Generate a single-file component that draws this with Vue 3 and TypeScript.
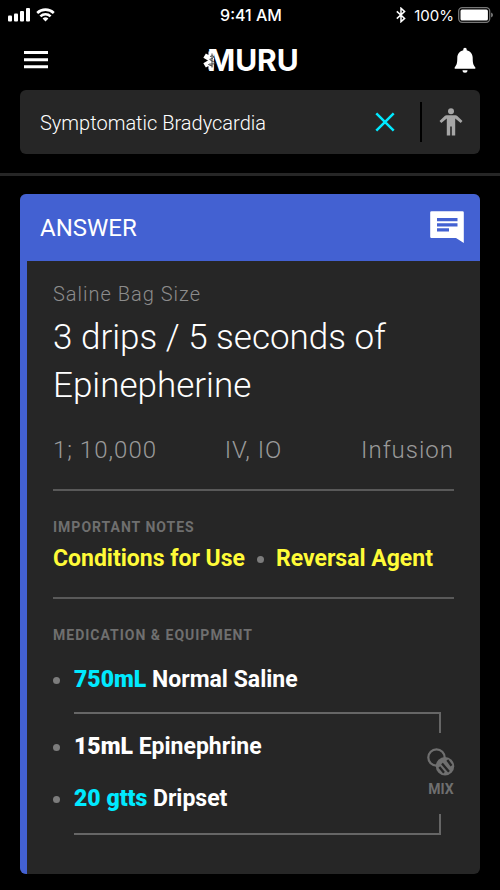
<script setup lang="ts">
import { ref } from 'vue'

interface Supply {
  amount: string
  name: string
  highlight: boolean
}

const query = ref('Symptomatic Bradycardia')
const details: string[] = ['1; 10,000', 'IV, IO', 'Infusion']
const base: Supply[] = [{ amount: '750mL', name: 'Normal Saline', highlight: true }]
const mixed: Supply[] = [
  { amount: '15mL', name: 'Epinephrine', highlight: false },
  { amount: '20 gtts', name: 'Dripset', highlight: true },
]
</script>

<template>
  <div class="screen">
    <div class="status">
      <div class="signals">
        <svg width="24" height="16" viewBox="0 0 24 16" fill="#fff" aria-hidden="true">
          <rect x="0" y="8.500" width="4" height="6" rx="1" />
          <rect x="6" y="6.500" width="4" height="8" rx="1" />
          <rect x="12" y="4" width="4" height="10.500" rx="1" />
          <rect x="18" y="1" width="4" height="13.500" rx="1" />
        </svg>
        <svg width="20" height="16" viewBox="0 0 20 16" aria-hidden="true">
          <g fill="none" stroke="#fff" stroke-width="2.6">
            <path d="M1.200 6a12 12 0 0 1 16.600 0" />
            <path d="M4.400 9.400a7.300 7.300 0 0 1 10.200 0" />
          </g>
          <path d="M6.600 11.600a4.400 4.400 0 0 1 5.800 0L9.500 14.600z" fill="#fff" />
        </svg>
      </div>
      <span class="time">9:41 AM</span>
      <div class="power">
        <svg width="10" height="16" viewBox="0 0 10 16" fill="none" stroke="#fff" stroke-width="1.5" aria-hidden="true">
          <path d="M.8 4.400 8.600 11.400 5 14.700V1.200L8.600 4.600.8 11.600" />
        </svg>
        <span>100%</span>
        <svg width="36" height="16" viewBox="0 0 36 16" aria-hidden="true">
          <rect x=".7" y=".7" width="31" height="14.600" rx="3.500" fill="none" stroke="#777" stroke-width="1.300" />
          <rect x="2.500" y="2.500" width="27.400" height="11" rx="1.500" fill="#fff" />
          <path d="M33.200 5.500a2.700 2.700 0 0 1 0 5z" fill="#888" />
        </svg>
      </div>
    </div>

    <header class="bar">
      <button class="icon" type="button" aria-label="Menu">
        <svg width="24" height="18" viewBox="0 0 24 18" fill="#fff">
          <path d="M0 0h24v3H0zM0 7.300h24v3H0zM0 14.300h24v3H0z" />
        </svg>
      </button>
      <h1 class="brand">
        <svg width="14" height="22" viewBox="0 0 14 22" aria-hidden="true">
          <path d="M1.600 6.600 10 11.500M1.600 16.400 10 11.500M8 2.500v18" stroke="#fff" stroke-width="5" fill="none" />
          <path d="M9 4.500v14M7 7.500q4-1.500 3.500.5t-3 2 2.500 2.500-1.500 2.500 1 2" fill="none" stroke="#333" stroke-width=".9" />
        </svg>
        <span>MURU</span>
      </h1>
      <button class="icon" type="button" aria-label="Notifications">
        <svg width="22" height="26" viewBox="0 0 22 26" fill="#fff">
          <path d="M11 .8c1 0 1.700.7 1.700 1.700v.7c3.700.8 6 3.800 6 7.600 0 5.300.6 7.400 2.600 9.400v1.500H.7v-1.500c2-2 2.600-4.100 2.600-9.400 0-3.800 2.300-6.800 6-7.600v-.7c0-1 .7-1.700 1.700-1.700zM8.500 23.200h5a2.500 2.500 0 0 1-5 0z" />
        </svg>
      </button>
    </header>

    <form class="search" @submit.prevent>
      <input v-model="query" type="text" aria-label="Search" />
      <button class="icon clear" type="button" aria-label="Clear" @click="query = ''">
        <svg width="20" height="20" viewBox="0 0 20 20" fill="none" stroke="#00e9ff" stroke-width="2.500">
          <path d="M1.300 1.300l17.400 17.400M18.700 1.300 1.300 18.700" />
        </svg>
      </button>
      <button class="icon patient" type="button" aria-label="Patient">
        <svg width="24" height="28" viewBox="0 0 24 28" fill="#a6a6a6">
          <circle cx="12" cy="3.200" r="3" />
          <path d="M7.500 7.200h9q1 0 1.800.7l5.200 5.200-1.800 2-5.500-4.500V27.500h-3.400V18.500h-1.600v9H7.800V10.600l-5.500 4.500-1.800-2 5.200-5.200q.8-.7 1.800-.7z" />
        </svg>
      </button>
    </form>

    <hr class="split" />

    <main class="card">
      <div class="card-head">
        <h2>ANSWER</h2>
        <button class="icon" type="button" aria-label="Comments">
          <svg width="34" height="33" viewBox="0 0 34 33">
            <path d="M1.500.3h31q1.300 0 1.300 1.300V32L26 27H1.500Q.2 27 .2 25.700V1.600Q.2.300 1.500.300z" fill="#fff" />
            <path d="M7 7h20.500v3.200H7zM7 12.200h20.500v3.200H7zM7 17.300h12v3.300H7z" fill="#4361d2" />
          </svg>
        </button>
      </div>

      <div class="body">
        <p class="label">Saline Bag Size</p>
        <p class="dose">3 drips / 5 seconds of Epinepherine</p>
        <div class="details">
          <span v-for="d in details" :key="d">{{ d }}</span>
        </div>

        <section>
          <h3>IMPORTANT NOTES</h3>
          <div class="notes">
            <a href="#conditions">Conditions for Use</a>
            <i class="dot"></i>
            <a href="#reversal">Reversal Agent</a>
          </div>
        </section>

        <section>
          <h3>MEDICATION &amp; EQUIPMENT</h3>
          <ul class="supplies">
            <li v-for="s in base" :key="s.name">
              <i class="dot"></i>
              <span><b :class="{ hot: s.highlight }">{{ s.amount }}</b> {{ s.name }}</span>
            </li>
          </ul>
          <div class="mixture">
            <ul class="supplies bracket">
              <li v-for="s in mixed" :key="s.name">
                <i class="dot"></i>
                <span><b :class="{ hot: s.highlight }">{{ s.amount }}</b> {{ s.name }}</span>
              </li>
            </ul>
            <div class="mix-side">
              <i class="stub top"></i>
              <button class="icon mix" type="button">
                <svg width="28" height="28" viewBox="0 0 28 28" fill="none">
                  <circle cx="9.500" cy="9.500" r="8.200" stroke="#6f6f6f" stroke-width="2.200" />
                  <circle cx="18" cy="18.300" r="9.200" fill="#6f6f6f" />
                  <path d="M12.300 19l4.700 5.700M15 15.500l7 8.300M20.300 12l4.200 5.700" stroke="#262626" stroke-width="2.300" />
                </svg>
                <span>MIX</span>
              </button>
              <i class="stub bottom"></i>
            </div>
          </div>
        </section>
      </div>
    </main>
  </div>
</template>

<style>
body {
  background: #000;
}
</style>

<style scoped>
.screen {
  box-sizing: border-box;
  min-height: 100vh;
  padding-bottom: 16px;
  background: #000;
  color: #fff;
  font-family: Roboto, "Liberation Sans", sans-serif;
}
h1, h2, h3, p, ul {
  margin: 0;
  padding: 0;
}
ul {
  list-style: none;
}
svg {
  display: block;
  flex: none;
}
.icon {
  display: flex;
  align-items: center;
  justify-content: center;
  padding: 0;
  border: 0;
  background: none;
  color: inherit;
  font: inherit;
  cursor: pointer;
}
.status {
  display: grid;
  grid-template-columns: 1fr auto 1fr;
  align-items: center;
  height: 30px;
  padding: 0 6px 0 8px;
  font-family: Inter, "Liberation Sans", sans-serif;
  font-size: 16px;
}
.signals {
  display: flex;
  gap: 4px;
}
.time {
  font-weight: 500;
}
.power {
  display: flex;
  align-items: center;
  justify-content: flex-end;
  gap: 8px;
}
.power span {
  margin-right: -4px;
  font-size: 15px;
}
.bar {
  display: flex;
  align-items: center;
  justify-content: space-between;
  height: 60px;
  padding: 0 24px;
}
.brand {
  display: flex;
  align-items: center;
  font-family: Inter, "Liberation Sans", sans-serif;
  font-size: 30px;
  line-height: 36px;
  font-weight: 700;
}
.brand svg {
  z-index: 1;
  margin-right: -10px;
}
.search {
  display: flex;
  align-items: center;
  height: 64px;
  margin: 0 20px;
  border-radius: 6px;
  background: #262626;
}
.search input {
  flex: 1;
  min-width: 0;
  height: 100%;
  box-sizing: border-box;
  padding: 2px 20px 0;
  border: 0;
  outline: 0;
  background: none;
  color: #fff;
  font: 300 20px Roboto, "Liberation Sans", sans-serif;
}
.clear {
  width: 70px;
  height: 40px;
}
.patient {
  width: 60px;
  height: 40px;
  border-left: 2px solid #000;
}
.split {
  height: 3px;
  margin: 19px 0 18px;
  border: 0;
  background: #262626;
}
.card {
  margin: 0 20px;
  border-radius: 6px;
  overflow: hidden;
  background: #262626;
}
.card-head {
  display: flex;
  align-items: center;
  justify-content: space-between;
  height: 67px;
  padding: 0 16px 0 20px;
  background: #4361d2;
}
.card-head h2 {
  font-size: 24px;
  line-height: 28px;
  font-weight: 400;
}
.body {
  padding: 21px 26px 39px;
  border-left: 7px solid #4361d2;
}
.label {
  color: #8c8c8c;
  font-size: 20px;
  line-height: 24px;
  font-weight: 300;
  letter-spacing: 1px;
}
.dose {
  margin-top: 8px;
  font-size: 35px;
  line-height: 48px;
  font-weight: 300;
}
.details {
  display: grid;
  grid-template-columns: 1fr auto 1fr;
  margin-top: 26px;
  color: #9a9a9a;
  font-size: 24px;
  line-height: 28px;
  font-weight: 300;
  letter-spacing: 1px;
}
.details span:last-child {
  text-align: right;
}
section {
  margin-top: 25px;
  padding-top: 26px;
  border-top: 2px solid #595959;
}
section + section {
  margin-top: 24px;
}
h3 {
  color: #6f6f6f;
  font-size: 14px;
  line-height: 20px;
  font-weight: 700;
  letter-spacing: 1px;
}
.notes {
  display: flex;
  align-items: center;
  gap: 12px;
  margin-top: 8px;
}
.notes a {
  color: #fffb38;
  font-size: 23px;
  line-height: 28px;
  font-weight: 700;
  text-decoration: none;
  white-space: nowrap;
}
.dot {
  flex: none;
  width: 7px;
  height: 7px;
  border-radius: 50%;
  background: #7c7c7c;
}
.supplies {
  margin-top: 21px;
  font-size: 23px;
  line-height: 28px;
  font-weight: 700;
}
.supplies li {
  display: flex;
  align-items: center;
  gap: 14px;
}
.hot {
  color: #00e9ff;
}
.mixture {
  display: flex;
  margin: 18px 0 0 21px;
}
.bracket {
  display: flex;
  flex-direction: column;
  flex: 1;
  gap: 24px;
  margin-top: 0;
  padding: 19px 0 20px;
  border: solid #666;
  border-width: 2px 0;
}
.bracket li {
  margin-left: -21px;
}
.mix-side {
  display: flex;
  flex-direction: column;
  justify-content: space-between;
  width: 26px;
}
.stub {
  box-sizing: border-box;
  width: 13px;
  height: 21px;
  border: 0 solid #666;
  border-right-width: 2px;
}
.stub.top {
  border-top-width: 2px;
}
.stub.bottom {
  border-bottom-width: 2px;
}
.mix {
  flex-direction: column;
  gap: 3px;
  color: #6f6f6f;
  font-size: 14px;
  line-height: 20px;
  font-weight: 700;
}
</style>
